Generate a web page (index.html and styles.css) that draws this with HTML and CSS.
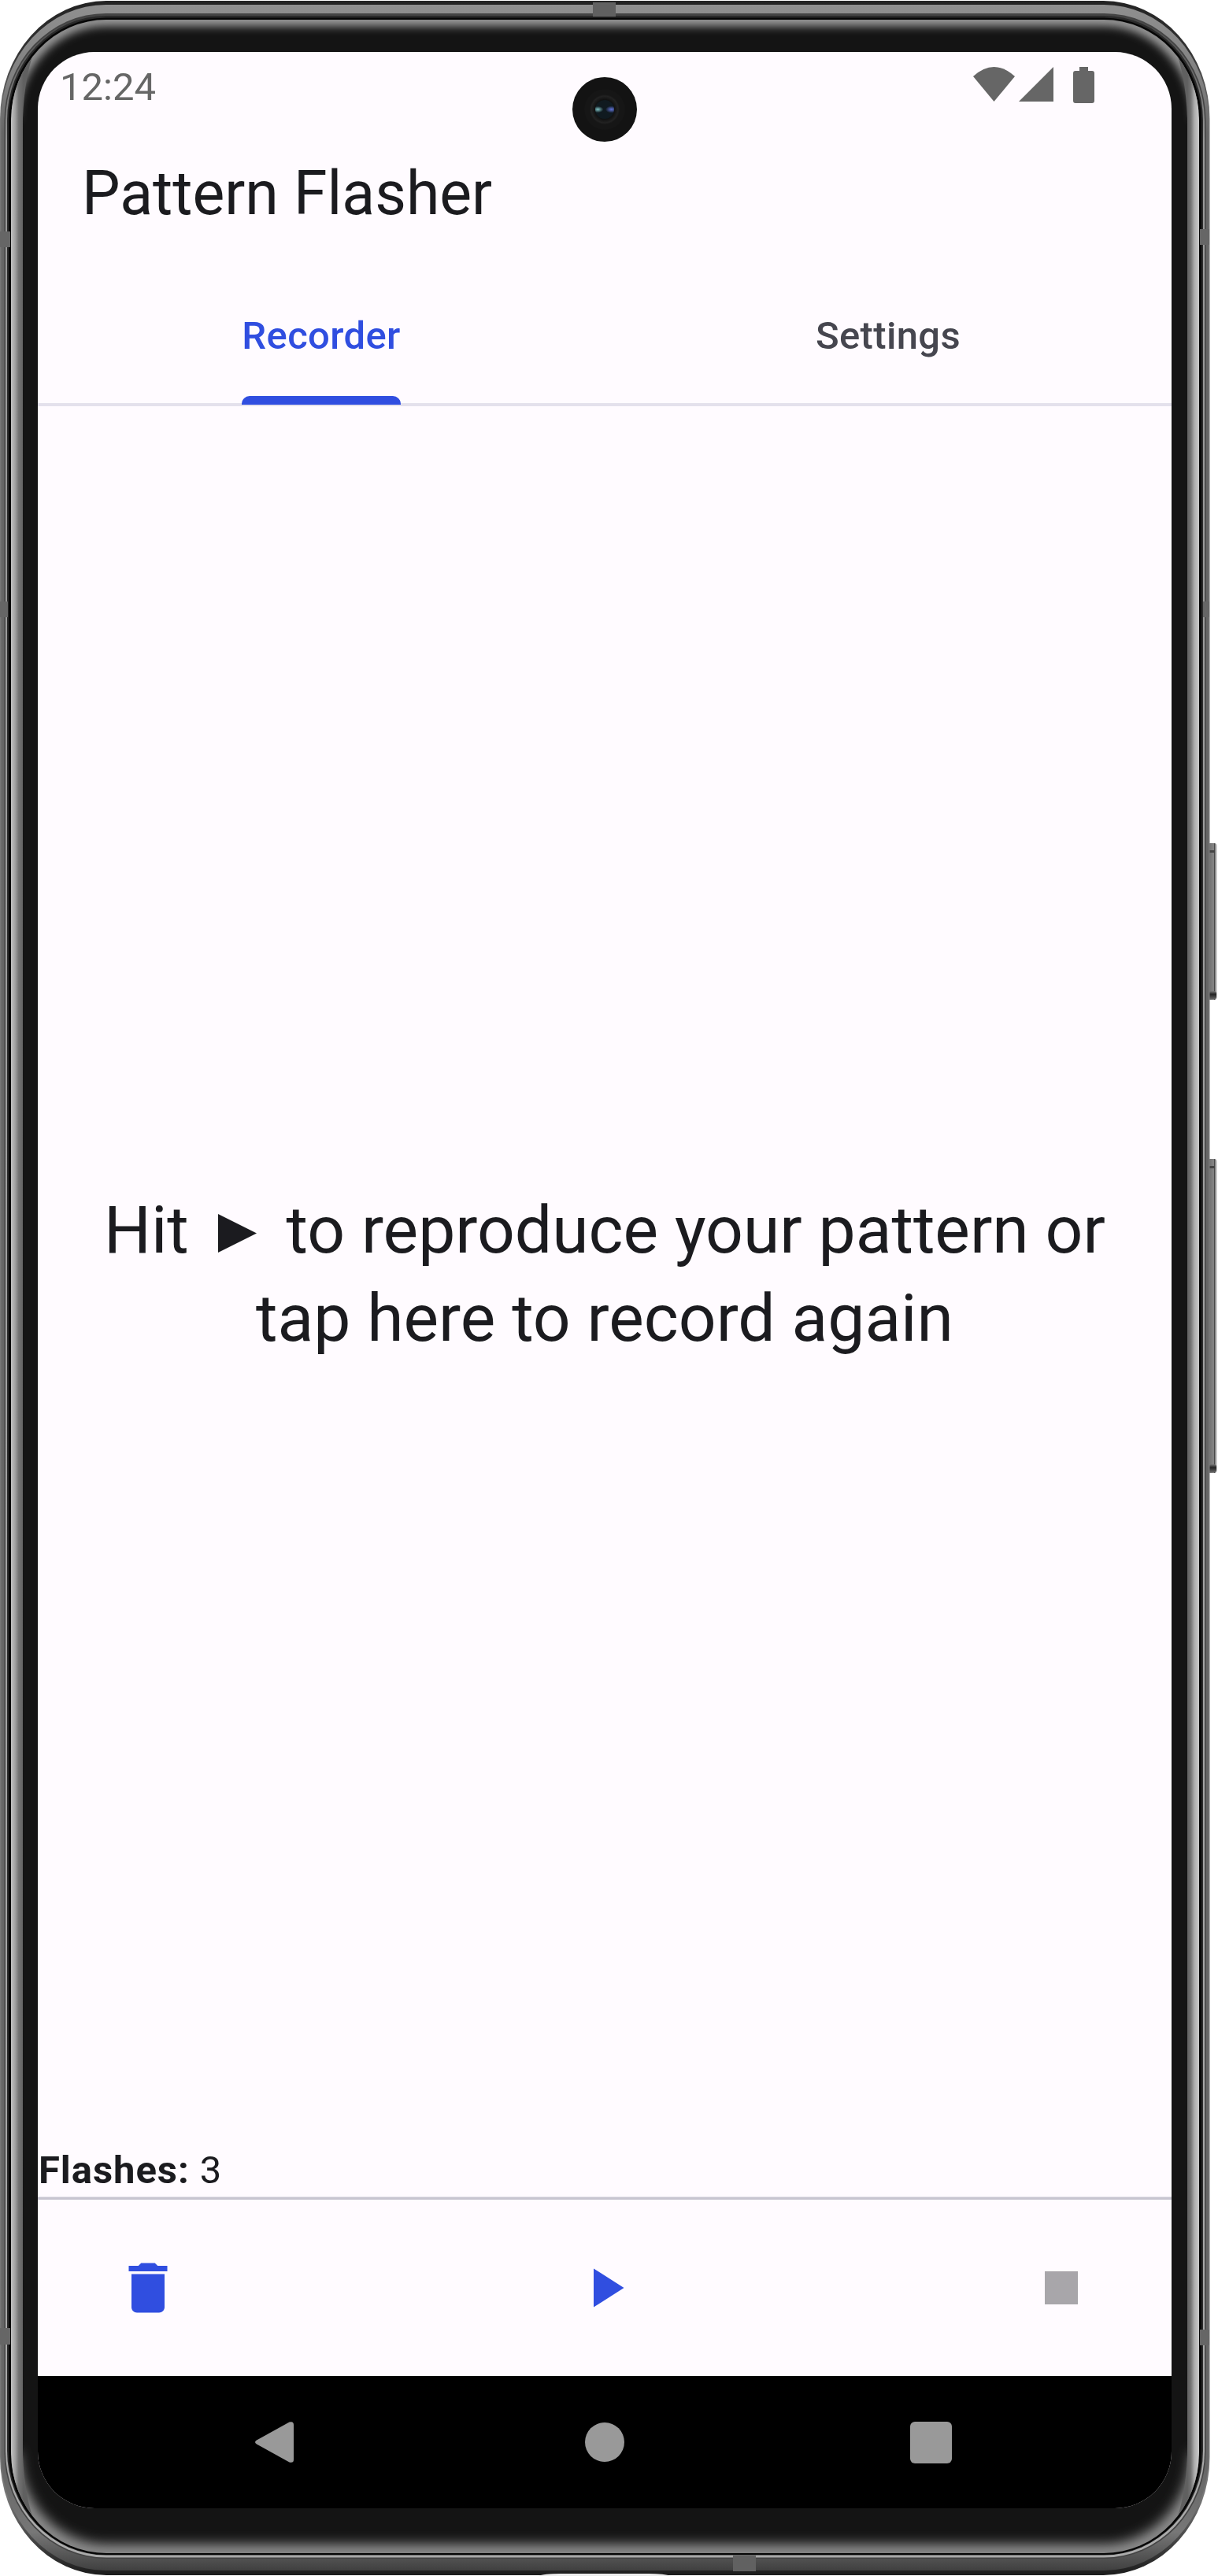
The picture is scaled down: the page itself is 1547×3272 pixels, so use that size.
FILE: index.html
```html
<!DOCTYPE html>
<html lang="en">
<head>
<meta charset="utf-8">
<title>Pattern Flasher</title>
<link rel="stylesheet" href="styles.css">
</head>
<body>
<div class="device">
  <svg class="shell" viewBox="0 0 1547 3272" aria-hidden="true">
    <defs>
      <linearGradient id="band" x1="0" y1="0" x2="0" y2="1">
        <stop offset="0" stop-color="#8f8f8f"/><stop offset=".03" stop-color="#808080"/><stop offset=".05" stop-color="#666"/>
        <stop offset=".96" stop-color="#666"/><stop offset=".985" stop-color="#777"/><stop offset="1" stop-color="#404040"/>
      </linearGradient>
      <linearGradient id="rim" x1="0" y1="0" x2="0" y2="1">
        <stop offset="0" stop-color="#232323"/><stop offset=".02" stop-color="#333"/><stop offset=".045" stop-color="#777"/>
        <stop offset=".97" stop-color="#777"/><stop offset="1" stop-color="#1c1c1c"/>
      </linearGradient>
      <linearGradient id="line" x1="0" y1="0" x2="0" y2="1">
        <stop offset="0" stop-color="#444"/><stop offset=".05" stop-color="#999"/><stop offset="1" stop-color="#aaa"/>
      </linearGradient>
      <linearGradient id="left" gradientUnits="userSpaceOnUse" x1="14" y1="0" x2="30" y2="0"><stop offset="0" stop-color="#c4c4c4"/><stop offset=".35" stop-color="#9e9e9e"/><stop offset=".6" stop-color="#747474"/><stop offset="1" stop-color="#606060"/></linearGradient>
      <linearGradient id="right" gradientUnits="userSpaceOnUse" x1="1508" y1="0" x2="1523" y2="0"><stop offset="0" stop-color="#606060"/><stop offset=".3" stop-color="#747474"/><stop offset=".6" stop-color="#acacac"/><stop offset="1" stop-color="#ccc"/></linearGradient>
      <linearGradient id="key"><stop offset="0" stop-color="#666"/><stop offset=".65" stop-color="#858585"/><stop offset=".75" stop-color="#3c3c3c"/><stop offset=".85" stop-color="#b0b0b0"/><stop offset="1" stop-color="#ddd"/></linearGradient>
      <linearGradient id="keyend" x1="0" y1="0" x2="0" y2="1"><stop offset="0" stop-color="#777"/><stop offset=".4" stop-color="#222"/><stop offset="1" stop-color="#666"/></linearGradient>
      <clipPath id="glass"><rect x="14" y="25" width="1509" height="3218" rx="121" ry="128"/></clipPath>
      <filter id="soft" filterUnits="userSpaceOnUse" x="-40" y="-40" width="1630" height="3360"><feGaussianBlur stdDeviation="6"/></filter>
      <filter id="softer" filterUnits="userSpaceOnUse" x="-40" y="-40" width="1630" height="3360"><feGaussianBlur stdDeviation="8"/></filter>
    </defs>
    <rect x="1533" y="1071" width="13" height="199" rx="4" fill="url(#key)"/>
    <rect x="1534" y="1259" width="11" height="10" rx="3" fill="url(#keyend)"/>
    <rect x="1536" y="1080" width="7" height="3" fill="#444"/>
    <rect x="1533" y="1472" width="13" height="399" rx="4" fill="url(#key)"/>
    <rect x="1534" y="1860" width="11" height="10" rx="3" fill="url(#keyend)"/>
    <rect x="1536" y="1481" width="7" height="3" fill="#444"/>
    <rect x="0" y="1" width="1536.500" height="3270" rx="135" ry="150" fill="url(#rim)"/>
    <rect x="1.500" y="6" width="1533.500" height="3259" rx="133" ry="145" fill="url(#band)"/>
    <rect x="5.500" y="17" width="1526" height="3233" rx="129" ry="136" fill="#444"/>
    <rect x="7" y="18.500" width="1523" height="3230" rx="128" ry="135" fill="url(#line)"/>
    <rect x="9" y="20" width="1519" height="3225.500" rx="126" ry="133" fill="#2a2a2a"/>
    <rect x="11" y="22.500" width="1515" height="3222.500" rx="124" ry="131" fill="#060606"/>
    <g clip-path="url(#glass)">
      <rect x="14" y="25" width="1509" height="3218" fill="#141414"/>
      <path d="M14 153A121 128 0 0 1 135 25H1402A121 128 0 0 1 1523 153" fill="none" stroke="#a0a0a0" stroke-width="16" filter="url(#soft)"/>
      <path d="M14 3115A121 128 0 0 0 135 3243H1402A121 128 0 0 0 1523 3115" fill="none" stroke="#959595" stroke-width="22" filter="url(#softer)"/>
      <path d="M14 150Q16 90 46 58Q31 95 29 150V3118Q31 3173 46 3210Q16 3178 14 3118Z" fill="url(#left)"/>
      <path d="M1523 150Q1521 90 1491 58Q1506 95 1508 150V3118Q1506 3173 1491 3210Q1521 3178 1523 3118Z" fill="url(#right)"/>
    </g>
    <path d="M753 3H782V21H753ZM931 3246H960V3266H931Z" fill="#616161"/>
    <path d="M0 294H13V314H0ZM1524 291H1536V311H1524ZM0 2957H13V2978H0ZM1524 2959H1536V2979H1524ZM0 764H10V784H0ZM1528 764H1536V784H1528Z" fill="#666"/>
    <path d="M684 3272Q690 3269 712 3269H824Q844 3269 852 3272Z" fill="#eee"/>
  </svg>
  <main class="screen">
    <header class="status">
      <time>12:24</time>
      <div class="indicators">
        <svg width="53" height="44" viewBox="0 0 53 44"><path d="M0 12Q26.500-12 53 12L26.500 44Z"/></svg>
        <svg width="44" height="44" viewBox="0 0 44 44"><path d="M44 0V44H0Z"/></svg>
        <svg class="battery" width="27" height="46" viewBox="0 0 27 46"><path d="M8 0H19V5H24Q27 5 27 8V43Q27 46 24 46H3Q0 46 0 43V8Q0 5 3 5H8Z"/></svg>
      </div>
    </header>
    <span class="camera"><i></i></span>
    <h1>Pattern Flasher</h1>
    <nav class="tabs">
      <a class="tab active"><span>Recorder</span></a>
      <a class="tab"><span>Settings</span></a>
    </nav>
    <section class="recorder">
      <p>Hit <svg class="glyph" width="82" height="49" viewBox="0 0 82 49"><path d="M16 0V49L65 24.500Z"/></svg> to reproduce your pattern or<br>tap here to record again</p>
    </section>
    <div class="count"><b>Flashes:</b> 3</div>
    <footer class="actions">
      <svg width="84" height="84" viewBox="0 0 24 24"><path d="M6 19c0 1.100.900 2 2 2h8c1.100 0 2-.900 2-2V7H6zM19 4h-3.500l-1-1h-5l-1 1H5v2h14z"/></svg>
      <svg width="84" height="84" viewBox="0 0 24 24"><path d="M8 5V19L19 12Z"/></svg>
      <svg class="disabled" width="84" height="84" viewBox="0 0 24 24"><path d="M6 6H18V18H6Z"/></svg>
    </footer>
    <div class="system">
      <svg width="50" height="52" viewBox="0 0 50 52"><path d="M43.500 .5Q49 -1 49 4V48Q49 53 43.500 51.500L2 28.500Q-2 26 2 23.500Z"/></svg>
      <svg class="home" width="50" height="50" viewBox="0 0 50 50"><circle cx="25" cy="25" r="25"/></svg>
      <svg width="53" height="53" viewBox="0 0 53 53"><rect width="53" height="53" rx="6"/></svg>
    </div>
  </main>
</div>
</body>
</html>
```
FILE: styles.css
```css
* { box-sizing: border-box; }
body { margin: 0; background: #fff; font-family: Roboto, sans-serif; color: #1b1b1f; }
.device { position: relative; width: 1547px; height: 3272px; padding: 66px 59px 86px 48px; overflow: hidden; }
.shell { position: absolute; inset: 0; width: 1547px; height: 3272px; }
.screen { position: relative; width: 1440px; height: 3120px; display: flex; flex-direction: column; overflow: hidden; border-radius: 72px; background: #fffbff; }
.status { height: 98px; display: flex; justify-content: space-between; align-items: flex-start; padding: 19px 98px 0 28px; color: #666; font-size: 49px; line-height: 51px; }
.indicators { display: flex; gap: 5px; fill: #666; }
.battery { margin-left: 20px; }
.camera { position: absolute; left: 679px; top: 32px; width: 82px; height: 82px; border-radius: 50%; display: grid; place-items: center; background: radial-gradient(circle, #0c0c0c 0 11px, #222 17px, #161616 19px 25px, #131313 26px); }
.camera i { width: 24px; height: 24px; border-radius: 50%; background: radial-gradient(ellipse at 14% 50%, #80c4c5, transparent 24%), radial-gradient(ellipse at 86% 50%, #6274d9, transparent 26%), #101a20; }
h1 { margin: 0; height: 184px; padding-left: 56px; font-size: 77px; line-height: 164px; font-weight: 400; }
.tabs { height: 168px; flex: none; display: flex; border-bottom: 4px solid #e4e1ec; }
.tab { flex: 1; display: flex; justify-content: center; font-size: 49px; line-height: 158px; font-weight: 500; letter-spacing: .35px; color: #46464f; }
.tab span { height: 166px; position: relative; }
.tab.active { color: #304ee0; }
.active span::after { content: ""; position: absolute; left: 0; right: 0; bottom: 0; height: 11px; border-radius: 10px 10px 0 0; background: #304ee0; }
.recorder { flex: 1; display: flex; align-items: center; justify-content: center; padding-bottom: 3px; }
p { margin: 0; font-size: 84px; line-height: 112px; text-align: center; }
.glyph { vertical-align: baseline; fill: currentColor; }
.count { height: 67px; padding-left: 1px; font-size: 49px; line-height: 66px; letter-spacing: .95px; border-bottom: 1px solid #e3e1e8; }
.actions { height: 227px; flex: none; display: flex; justify-content: space-between; align-items: center; padding: 0 98px; border-top: 3px solid #c7c5d0; fill: #304ee0; }
.disabled { fill: #a8a6aa; }
.system { height: 168px; flex: none; display: flex; justify-content: space-between; align-items: center; padding: 0 279px 0 276px; background: #000; fill: #999; }
.home { margin-left: 5px; }
```
